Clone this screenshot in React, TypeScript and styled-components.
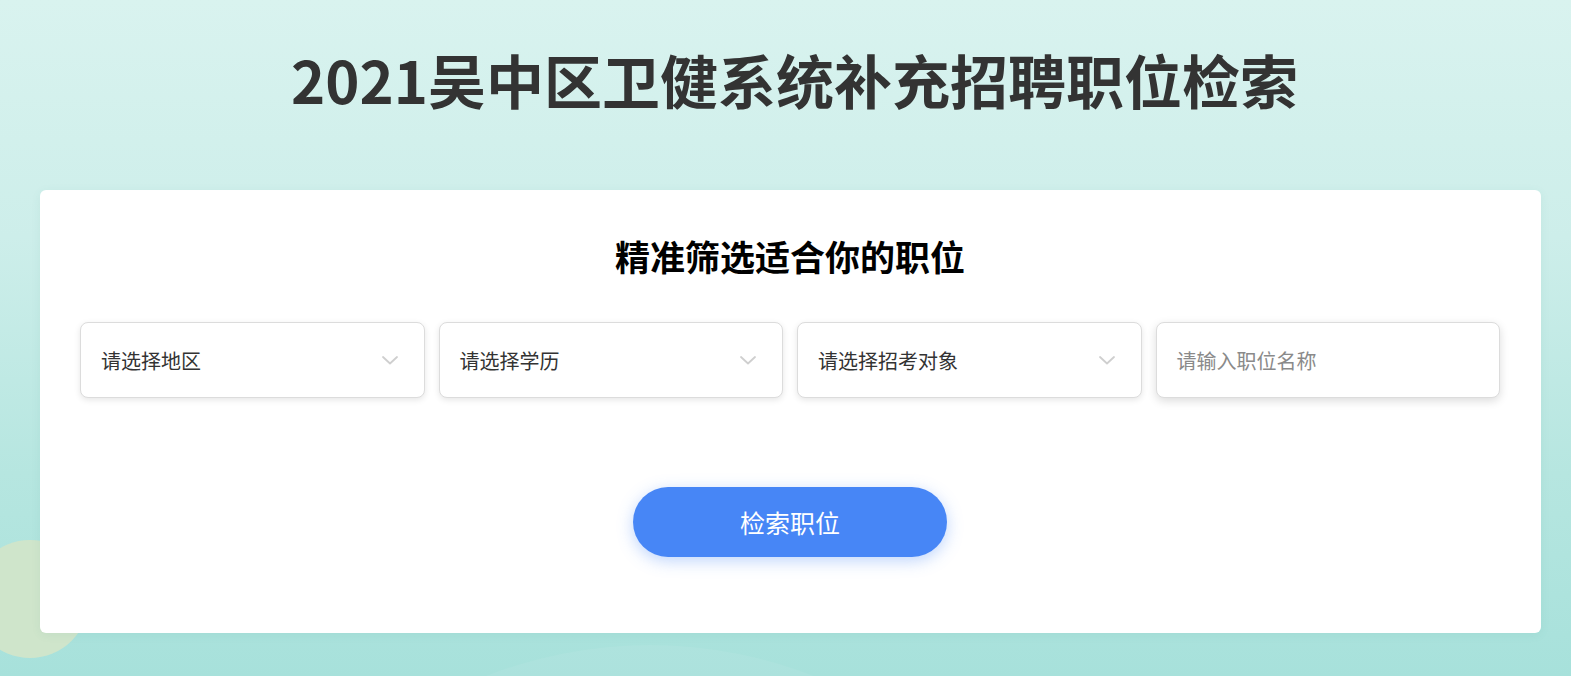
import React from "react";
import styled, { createGlobalStyle } from "styled-components";

const GlobalStyle = createGlobalStyle`
  * { box-sizing: border-box; }
  html, body {
    margin: 0;
    padding: 0;
    font-family: "Noto Sans CJK SC", "Noto Sans", sans-serif;
  }
`;

const Page = styled.div`
  position: relative;
  min-height: 100vh;
  overflow: hidden;
  background: linear-gradient(180deg, #d9f3ef 0%, #cdeeea 35%, #b6e6e0 70%, #a7e1db 100%);
  padding: 38px 30px 40px 40px;
  display: flex;
  flex-direction: column;
  align-items: center;
`;

const Blob = styled.div<{ $size: number; $left: number; $top: number; $color: string }>`
  position: absolute;
  width: ${(p) => p.$size}px;
  height: ${(p) => p.$size}px;
  left: ${(p) => p.$left}px;
  top: ${(p) => p.$top}px;
  border-radius: 50%;
  background: ${(p) => p.$color};
  pointer-events: none;
`;

const Title = styled.h1`
  position: relative;
  margin: 0 0 70px 8px;
  font-size: 58px;
  line-height: 82px;
  font-weight: 700;
  color: #333333;
`;

const Card = styled.div`
  position: relative;
  align-self: stretch;
  background: #ffffff;
  border-radius: 6px;
  box-shadow: 0 2px 10px rgba(60, 140, 130, 0.08);
  padding: 40px 41px 76px 40px;
  display: flex;
  flex-direction: column;
  align-items: center;
`;

const SubTitle = styled.h2`
  margin: 0 0 40px;
  font-size: 35px;
  line-height: 52px;
  font-weight: 700;
  color: #000000;
`;

const FilterRow = styled.div`
  width: 100%;
  display: grid;
  grid-template-columns: repeat(4, 1fr);
  gap: 14px;
  margin-bottom: 89px;
`;

const Field = styled.div`
  height: 76px;
  border: 1px solid #dcdcdc;
  border-radius: 8px;
  background: #fff;
  box-shadow: 0 2px 6px rgba(0, 0, 0, 0.1);
  display: flex;
  align-items: center;
  justify-content: space-between;
  padding: 0 26px 0 20px;
`;

const FieldText = styled.span<{ $placeholder?: boolean }>`
  font-size: 20px;
  color: ${(p) => (p.$placeholder ? "#8a8a8a" : "#333333")};
`;

const InputField = styled(Field)`
  box-shadow: 0 3px 10px rgba(0, 0, 0, 0.14);
`;

const SearchButton = styled.button`
  width: 314px;
  height: 70px;
  border: none;
  border-radius: 35px;
  background: #4786f6;
  color: #ffffff;
  font-family: inherit;
  font-size: 25px;
  box-shadow: 0 4px 16px rgba(71, 134, 246, 0.35);
  cursor: pointer;
`;

function Chevron() {
  return (
    <svg width="16" height="9" viewBox="0 0 16 9" fill="none">
      <path d="M1 1l7 6.5L15 1" stroke="#cfcfcf" strokeWidth="1.8" strokeLinecap="round" strokeLinejoin="round" />
    </svg>
  );
}

const selects = ["请选择地区", "请选择学历", "请选择招考对象"];

export default function App() {
  return (
    <>
      <GlobalStyle />
      <Page>
        <Blob $size={118} $left={-29} $top={540} $color="#cfe5cb" />
        <Blob $size={900} $left={200} $top={645} $color="rgba(255,255,255,0.06)" />
        <Title>2021吴中区卫健系统补充招聘职位检索</Title>
        <Card>
          <SubTitle>精准筛选适合你的职位</SubTitle>
          <FilterRow>
            {selects.map((s) => (
              <Field key={s}>
                <FieldText>{s}</FieldText>
                <Chevron />
              </Field>
            ))}
            <InputField>
              <FieldText $placeholder>请输入职位名称</FieldText>
            </InputField>
          </FilterRow>
          <SearchButton>检索职位</SearchButton>
        </Card>
      </Page>
    </>
  );
}
